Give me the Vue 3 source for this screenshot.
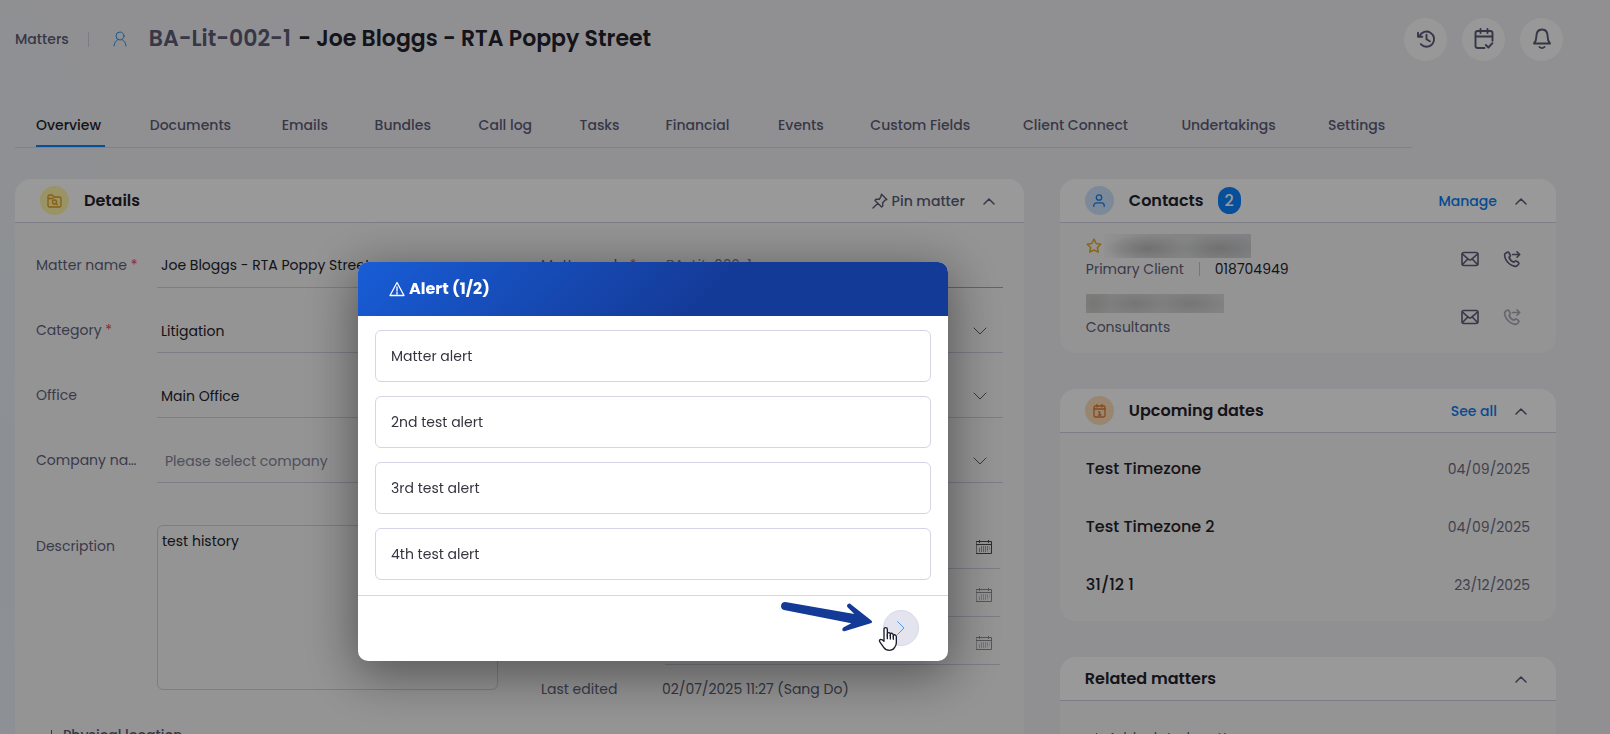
<script setup>
import { ref } from 'vue';

const tabs = [
  'Overview', 'Documents', 'Emails', 'Bundles', 'Call log', 'Tasks',
  'Financial', 'Events', 'Custom Fields', 'Client Connect', 'Undertakings', 'Settings',
];
const activeTab = ref('Overview');

const matterName = ref('Joe Bloggs - RTA Poppy Street');
const matterCode = ref('BA-Lit-002-1');
const description = ref('test history');

// Left column drop-downs
const selects = [
  { id: 'category', label: 'Category', required: true, value: 'Litigation' },
  { id: 'office', label: 'Office', required: false, value: 'Main Office' },
  { id: 'company', label: 'Company name', required: false, value: '', placeholder: 'Please select company' },
];
const sideSelects = ['Sub category', 'Status', 'Department'];

const dates = [
  { name: 'Date opened', muted: false },
  { name: 'Date closed', muted: true },
  { name: 'Date archived', muted: true },
];

const contacts = [
  { role: 'Primary Client', phone: '018704949', starred: true, canCall: true },
  { role: 'Consultants', phone: '', starred: false, canCall: false },
];

const upcoming = [
  { title: 'Test Timezone', date: '04/09/2025' },
  { title: 'Test Timezone 2', date: '04/09/2025' },
  { title: '31/12 1', date: '23/12/2025' },
];

const alerts = ['Matter alert', '2nd test alert', '3rd test alert', '4th test alert'];
</script>

<template>
  <div class="page">
    <header class="topbar">
      <a href="#" class="crumb">Matters</a>
      <span class="crumb-divider"></span>
      <svg class="crumb-icon" width="14" height="16" viewBox="0 0 14 16">
        <circle cx="7" cy="5" r="4" />
        <path d="M1 15c.3-3.400 2-5.500 4-6.500M13 15c-.3-3.400-2-5.500-4-6.500" />
      </svg>
      <h1 class="title"><span class="title-code">BA-Lit-002-1</span> - Joe Bloggs - RTA Poppy Street</h1>
      <div class="top-actions">
        <button type="button" class="round-btn" aria-label="History">
          <svg width="20" height="20" viewBox="0 0 20 20">
            <path d="M3.500 7.200A7.600 7.600 0 1 1 4.800 15.200M2 3.800v4h4.300M10.500 5.800v4.400l3.300 2" />
          </svg>
        </button>
        <button type="button" class="round-btn" aria-label="Calendar">
          <svg width="20" height="22" viewBox="0 0 20 22">
            <path d="M10.500 20H3.800A2.300 2.300 0 0 1 1.500 17.700V5.300A2.300 2.300 0 0 1 3.800 3h12.400a2.300 2.300 0 0 1 2.300 2.300v7.400M1.500 8.500h17M6.500 1v4M13.500 1v4M11.800 17l2.600 2.500 4-4.300" />
          </svg>
        </button>
        <button type="button" class="round-btn" aria-label="Notifications">
          <svg width="20" height="22" viewBox="0 0 20 22">
            <path d="M2 15.500c1.500-1.500 2.300-3.500 2.300-6.500C4.300 4 6.700 1.500 10 1.500S15.700 4 15.700 9c0 3 .8 5 2.300 6.500zM7.500 19c1.300 1.500 3.700 1.500 5 0" />
          </svg>
        </button>
      </div>
    </header>

    <nav class="tabs">
      <a
        v-for="tab in tabs"
        :key="tab"
        href="#"
        :class="['tab', { active: tab === activeTab }]"
        @click.prevent="activeTab = tab"
      ><span class="tab-text">{{ tab }}</span></a>
    </nav>

    <main class="layout">
      <section class="card">
        <div class="card-header">
          <span class="badge-icon yellow">
            <svg width="15" height="14" viewBox="0 0 15 14">
              <path d="M1 11.500v-9A1.500 1.500 0 0 1 2.500 1h2.700L7 3h5.500A1.500 1.500 0 0 1 14 4.500v7a1.500 1.500 0 0 1-1.500 1.500h-10A1.500 1.500 0 0 1 1 11.500zM1 4.500h5M9 9.500l1.300 1.200" />
              <circle cx="7.500" cy="8" r="2" />
            </svg>
          </span>
          <h2>Details</h2>
          <button type="button" class="pin-btn">
            <svg width="16" height="16" viewBox="0 0 16 16">
              <path d="M9.500 1.200l5.300 5.300-1.600.6-2.500 2.600.1 3.300-1.200 1L3 7.400l1-1.200 3.300.1L9 3.300zM5.800 10.200L1 15" />
            </svg>
            Pin matter
          </button>
          <button type="button" class="toggle" aria-label="Collapse details">
            <svg width="12" height="8" viewBox="0 0 12 8"><path d="M1 7l5-5 5 5" /></svg>
          </button>
        </div>

        <div class="details">
          <div class="column">
            <div class="row">
              <label for="matter-name" class="label">Matter name <span class="required">*</span></label>
              <div class="field"><input id="matter-name" v-model="matterName" type="text" /></div>
            </div>
            <div v-for="item in selects" :key="item.id" class="row">
              <label :for="item.id" class="label">{{ item.label }} <span v-if="item.required" class="required">*</span></label>
              <div class="field">
                <select :id="item.id" :class="{ placeholder: !item.value }">
                  <option>{{ item.value || item.placeholder }}</option>
                </select>
              </div>
            </div>
            <div class="row description">
              <label for="description" class="label">Description</label>
              <textarea id="description" v-model="description"></textarea>
            </div>
            <button type="button" class="add-btn location">
              <svg width="11" height="11" viewBox="0 0 11 11"><path d="M5.500 0v11M0 5.500h11" /></svg>
              Physical location
            </button>
          </div>

          <div class="column">
            <div class="row">
              <label for="matter-code" class="label">Matter code <span class="required">*</span></label>
              <div class="field dark"><input id="matter-code" v-model="matterCode" type="text" class="muted-value" /></div>
            </div>
            <div v-for="name in sideSelects" :key="name" class="row">
              <span class="label"></span>
              <div class="field">
                <select :aria-label="name"><option></option></select>
                <svg class="chevron" width="14" height="8" viewBox="0 0 14 8"><path d="M1 1l6 6 6-6" /></svg>
              </div>
            </div>
            <div class="dates">
              <div v-for="date in dates" :key="date.name" class="row">
                <span class="label"></span>
                <div class="field date">
                  <input type="text" :aria-label="date.name" />
                  <svg :class="['calendar', { muted: date.muted }]" width="16" height="14" viewBox="0 0 16 14">
                    <path d="M.5 1.500h15v12H.5zM.5 4.500h15M3.500 0v2.500M12.500 0v2.500" />
                    <path class="dots" d="M5 7h8.500M3 9h10.500M3 11h8.500" />
                  </svg>
                </div>
              </div>
            </div>
            <div class="row edited">
              <span class="label">Last edited</span>
              <span class="edited-value">02/07/2025 11:27 (Sang Do)</span>
            </div>
          </div>
        </div>
      </section>

      <aside class="sidebar">
        <section class="card">
          <div class="card-header">
            <span class="badge-icon blue">
              <svg width="12" height="13" viewBox="0 0 12 13">
                <circle cx="6" cy="3.500" r="2.700" />
                <path d="M.8 12.500v-1A2.700 2.700 0 0 1 3.500 8.800h5a2.700 2.700 0 0 1 2.700 2.700v1" />
              </svg>
            </span>
            <h2>Contacts</h2>
            <span class="count">2</span>
            <a href="#" class="header-link">Manage</a>
            <button type="button" class="toggle" aria-label="Collapse contacts">
              <svg width="12" height="8" viewBox="0 0 12 8"><path d="M1 7l5-5 5 5" /></svg>
            </button>
          </div>
          <ul class="list">
            <li v-for="contact in contacts" :key="contact.role" class="list-item">
              <div class="contact-text">
                <div class="contact-line">
                  <svg v-if="contact.starred" class="star" width="16" height="16" viewBox="0 0 16 16">
                    <path d="M8 1.200l2.100 4.300 4.700.7-3.400 3.300.8 4.700L8 12l-4.200 2.200.8-4.700L1.200 6.200l4.700-.7z" />
                  </svg>
                  <span :class="['redacted', { wide: contact.starred }]"></span>
                </div>
                <div class="contact-line">
                  <span class="role">{{ contact.role }}</span>
                  <span v-if="contact.phone" class="phone">{{ contact.phone }}</span>
                </div>
              </div>
              <div class="contact-actions">
                <button type="button" class="icon-btn" aria-label="Send email">
                  <svg width="18" height="16" viewBox="0 0 18 16">
                    <rect x="1" y="1.500" width="16" height="13" rx="2" />
                    <path d="M1.500 3l5.700 5.200a2.700 2.700 0 0 0 3.600 0L16.500 3M1.500 13.500l4.800-5M16.500 13.500l-4.800-5" />
                  </svg>
                </button>
                <button type="button" class="icon-btn" :disabled="!contact.canCall" aria-label="Call">
                  <svg width="18" height="18" viewBox="0 0 18 18">
                    <path d="M4.300 2.200L2.400 3.400C.5 5 2.500 10 5.200 12.700s7 4.700 9 3l1.500-1.700c.4-.5.3-1.100-.2-1.500l-2-1.400c-.5-.4-1.100-.3-1.500.1l-1 1C9 11.500 6.700 9.300 6 7.400l1-1c.4-.4.500-1 .1-1.500L5.800 2.500c-.4-.5-1-.6-1.500-.3zM9.500 4.500h7M14 1.800l2.700 2.700L14 7.200" />
                  </svg>
                </button>
              </div>
            </li>
          </ul>
        </section>

        <section class="card">
          <div class="card-header">
            <span class="badge-icon orange">
              <svg width="13" height="14" viewBox="0 0 13 14">
                <rect x="1" y="2" width="11" height="11" rx="1.500" />
                <path d="M1 5h11M4 .5V3M9 .5V3M5.500 8h1.200v3M5.300 11h2.600" />
              </svg>
            </span>
            <h2>Upcoming dates</h2>
            <a href="#" class="header-link">See all</a>
            <button type="button" class="toggle" aria-label="Collapse upcoming dates">
              <svg width="12" height="8" viewBox="0 0 12 8"><path d="M1 7l5-5 5 5" /></svg>
            </button>
          </div>
          <ul class="list">
            <li v-for="item in upcoming" :key="item.title" class="list-item">
              <span class="event">{{ item.title }}</span>
              <span class="event-date">{{ item.date }}</span>
            </li>
          </ul>
        </section>

        <section class="card">
          <div class="card-header">
            <h2>Related matters</h2>
            <button type="button" class="toggle" aria-label="Collapse related matters">
              <svg width="12" height="8" viewBox="0 0 12 8"><path d="M1 7l5-5 5 5" /></svg>
            </button>
          </div>
          <button type="button" class="add-btn related">
            <svg width="11" height="11" viewBox="0 0 11 11"><path d="M5.500 0v11M0 5.500h11" /></svg>
            Add related matter
          </button>
        </section>
      </aside>
    </main>

    <!-- Alert dialog -->
    <div class="overlay">
      <div class="modal" role="dialog" aria-labelledby="alert-title">
        <div class="modal-header">
          <svg width="16" height="16" viewBox="0 0 16 16">
            <path d="M8 1.500L15 14.500H1zM8 6v4M8 11.500v1.500" />
          </svg>
          <h2 id="alert-title">Alert (1/2)</h2>
        </div>
        <ul class="modal-body">
          <li v-for="alert in alerts" :key="alert" class="alert">{{ alert }}</li>
        </ul>
        <div class="modal-footer">
          <button type="button" class="next-btn" aria-label="Next alert">
            <svg width="10" height="16" viewBox="0 0 10 16"><path d="M1.500 1.500L8 8l-6.500 6.500" /></svg>
          </button>
          <svg class="arrow" width="94" height="34" viewBox="30 30 282 102">
            <path d="M46 36L253 72 232 51Q229 43 236 41 240 40 244 44L303 91Q310 97 302 100L226 123Q219 125 217 120 216 115 221 112L244 100 42 60Q33 57 33 48 34 36 46 36z" />
          </svg>
          <svg class="hand" width="20" height="26" viewBox="324 108 60 78">
            <path d="M342 154V118Q342 113 347 113T352 118V137V131Q353 127 357 128T361 133V138V133Q363 129 366 130T370 135V141V137Q373 133 376 135T379 140V158Q379 166 374 172 371 180 359 181 347 181 341 172L329 155Q327 149 332 148 337 148 342 154z" />
            <path d="M352 134v12M361 136v11M370 139v9" />
          </svg>
        </div>
      </div>
    </div>
  </div>
</template>

<style>
html,
body {
  margin: 0;
}
</style>

<style scoped>
* {
  box-sizing: border-box;
}

.page {
  height: 100vh;
  overflow: hidden;
  padding: 0 54px 0 15px;
  background: radial-gradient(ellipse 160px 600px at 0 70%, #e9f1f9, #f1f1f4);
  color: #22222c;
  font-family: Poppins, Inter, sans-serif;
  font-size: 14px;
  line-height: 22px;
}

h1,
h2,
ul {
  margin: 0;
  padding: 0;
}

ul {
  list-style: none;
}

a {
  text-decoration: none;
}

button,
input,
select,
textarea {
  border: 0;
  padding: 0;
  background: none;
  color: inherit;
  font: inherit;
}

button {
  cursor: pointer;
}

svg {
  flex: none;
  fill: none;
  stroke: currentColor;
  stroke-linecap: round;
  stroke-linejoin: round;
}

.topbar {
  display: flex;
  align-items: center;
  height: 78px;
}

.crumb {
  color: #5c5c78;
  font-weight: 500;
}

.crumb-divider {
  width: 1px;
  height: 15px;
  margin: 0 24px 0 19px;
  background: #cfcfd8;
}

.crumb-icon {
  color: #2e93e6;
}

.title {
  margin-left: 22px;
  font-size: 22px;
  line-height: 32px;
  font-weight: 600;
}

.title-code {
  margin-right: 2px;
  color: #5c5c78;
}

.top-actions {
  display: flex;
  gap: 15px;
  margin: 0 -7px 0 auto;
}

.round-btn {
  display: flex;
  align-items: center;
  justify-content: center;
  width: 43px;
  height: 43px;
  border-radius: 50%;
  background: #fdfdfd;
  color: #5a5a78;
}

.round-btn svg {
  stroke-width: 1.9;
}

/* Spare width is shared in proportion to each tab's text */
.tabs {
  display: table;
  width: calc(100% - 144px);
  margin-top: 24px;
  padding-left: 21px;
  border-bottom: 1px solid #d6d6de;
}

.tab {
  display: table-cell;
  padding-right: 37px;
  color: #5c5c78;
  font-weight: 500;
  white-space: nowrap;
}

.tab:last-child {
  padding-right: 18px;
}

.tab-text {
  display: inline-block;
  height: 45px;
  padding-top: 12px;
  border-bottom: 2px solid transparent;
  vertical-align: top;
}

.tab.active {
  padding-right: 33px;
  color: #22222c;
}

.tab.active .tab-text {
  padding-right: 4px;
  border-color: #0d84ff;
}

.layout {
  display: grid;
  grid-template-columns: 61fr 30fr;
  align-items: start;
  gap: 36px;
  margin-top: 31px;
}

.sidebar {
  display: flex;
  flex-direction: column;
  gap: 36px;
}

.card {
  border-radius: 16px;
  background: #f7f7f7;
}

.card-header {
  display: flex;
  align-items: center;
  height: 44px;
  padding: 0 29px 0 25px;
  border-bottom: 1px solid #d0d0e2;
  border-radius: 16px 16px 0 0;
  background: #fff;
}

.card-header h2 {
  font-size: 16px;
  font-weight: 600;
}

.badge-icon {
  display: flex;
  align-items: center;
  justify-content: center;
  width: 29px;
  height: 29px;
  margin-right: 15px;
  border-radius: 50%;
}

.badge-icon svg {
  stroke-width: 1.3;
}

.badge-icon.yellow {
  background: #fff5ab;
  color: #dfa020;
}

.badge-icon.blue {
  background: #cfe5ff;
  color: #1b7fe8;
}

.badge-icon.orange {
  background: #ffe0bd;
  color: #e07a30;
}

.count {
  width: 23px;
  height: 27px;
  margin-left: 14px;
  border-radius: 12px;
  background: #0d84ff;
  color: #fff;
  font-size: 16px;
  line-height: 27px;
  font-weight: 500;
  text-align: center;
}

.pin-btn {
  display: flex;
  align-items: center;
  gap: 4px;
  margin-left: auto;
  color: #5c5c78;
  font-weight: 500;
}

.pin-btn svg {
  stroke-width: 1.4;
}

.header-link {
  margin-left: auto;
  color: #0d7df2;
  font-weight: 500;
}

.toggle {
  display: flex;
  margin-left: auto;
  color: #5c5c78;
}

.toggle svg {
  stroke-width: 1.5;
}

.pin-btn + .toggle,
.header-link + .toggle {
  margin-left: 18px;
}

.details {
  display: grid;
  grid-template-columns: 1fr 1fr;
  gap: 43px;
  padding: 21px 21px 0;
}

.column {
  display: flex;
  flex-direction: column;
  gap: 21px;
}

.row {
  display: flex;
  height: 44px;
}

.label {
  flex: none;
  width: 121px;
  padding-right: 16px;
  overflow: hidden;
  color: #62627c;
  line-height: 43px;
  text-overflow: ellipsis;
  white-space: nowrap;
}

.required {
  color: #e8504a;
}

.field {
  display: flex;
  flex: 1;
  align-items: center;
  min-width: 0;
  padding-left: 4px;
  border-bottom: 1px solid #d0d0e2;
}

.field.dark {
  border-color: #a5a5b2;
}

.field input,
.field select {
  flex: 1;
  min-width: 0;
  height: 42px;
  appearance: none;
  outline: none;
}

.field .placeholder {
  padding-left: 4px;
  color: #84849a;
}

.field .muted-value {
  color: #84849a;
}

.chevron {
  margin-right: 16px;
  color: #5c5c68;
}

.description {
  height: 165px;
  margin-top: 21px;
}

textarea {
  flex: 1;
  min-width: 0;
  padding: 4px;
  border: 1px solid #d0d0d9;
  border-radius: 6px;
  outline: none;
  resize: none;
}

.add-btn {
  display: flex;
  align-items: center;
  gap: 6px;
  color: #5c5c78;
}

.location {
  margin: 13px 0 0 10px;
  font-weight: 500;
}

.dates {
  margin-top: 17px;
}

.dates .row {
  height: 48px;
}

.field.date {
  margin: 0 3px;
  padding-top: 4px;
}

.calendar {
  margin-right: 8px;
  color: #4a4a50;
}

.calendar.muted {
  color: #8e8e96;
}

.calendar .dots {
  stroke-dasharray: 1 1;
  stroke-linecap: butt;
}

.edited {
  margin-top: -18px;
}

.edited-value {
  color: #5c5c70;
  line-height: 43px;
}

.list {
  padding: 7px 26px;
}

.list-item {
  display: flex;
  align-items: center;
  justify-content: space-between;
  height: 58px;
}

.contact-text {
  padding-bottom: 4px;
}

.contact-line {
  display: flex;
  align-items: center;
  height: 23px;
}

.star {
  margin-right: 2px;
  color: #e5ab28;
  stroke-width: 1.5;
}

/* Hidden client names, shown as soft smudges */
.redacted {
  width: 138px;
  height: 19px;
  background:
    radial-gradient(ellipse 30px 12px at 50px 50%, #c4c4c4, transparent),
    radial-gradient(ellipse 36px 12px at 104px 50%, #c4c4c4, transparent),
    radial-gradient(ellipse 20px 16px at 8px 50%, #c8c6c4, transparent),
    linear-gradient(90deg, #d6d6d6, #d9dadc);
}

.redacted.wide {
  width: 147px;
  height: 24px;
  background:
    radial-gradient(ellipse 44px 14px at 44px 60%, #bcbcbc, transparent),
    radial-gradient(ellipse 40px 14px at 116px 60%, #bcbcbc, transparent),
    linear-gradient(90deg, #f3f3f3, #e0e0e0 30%, #d4d6da);
}

.role {
  color: #62627c;
}

.phone {
  margin-left: 15px;
  padding-left: 15px;
  border-left: 1px solid #c5c5d2;
  line-height: 14px;
}

.contact-actions {
  display: flex;
  gap: 24px;
  padding-right: 9px;
}

.icon-btn {
  display: flex;
  align-items: center;
  color: #5c5c78;
}

.icon-btn svg {
  stroke-width: 1.6;
}

.icon-btn:disabled {
  opacity: 0.5;
}

.event {
  font-size: 16px;
  font-weight: 500;
}

.event-date {
  color: #6c6c84;
}

.related {
  margin: 26px 0 20px 31px;
}

.overlay {
  position: fixed;
  inset: 0;
  display: flex;
  align-items: flex-start;
  justify-content: center;
  padding: 262px 304px 0 0;
  background: rgba(0, 0, 0, 0.4);
}

.modal {
  width: 590px;
  max-width: 100%;
  border-radius: 10px;
  background: #fff;
  box-shadow: 0 11px 50px 4px rgba(0, 0, 0, 0.42);
}

.modal-header {
  display: flex;
  align-items: center;
  gap: 4px;
  height: 54px;
  padding: 0 31px;
  border-radius: 10px 10px 0 0;
  background: linear-gradient(135deg, #185dd6, #143a97 60%);
  color: #fff;
}

.modal-header svg {
  stroke-width: 1.3;
}

.modal-header h2 {
  font-size: 16px;
  font-weight: 700;
}

.modal-body {
  display: flex;
  flex-direction: column;
  gap: 14px;
  padding: 14px 17px 15px;
}

.alert {
  padding: 14px 15px;
  border: 1px solid #d6d5e6;
  border-radius: 6px;
  color: #35353f;
}

.modal-footer {
  position: relative;
  display: flex;
  justify-content: flex-end;
  padding: 14px 29px 15px;
  border-top: 1px solid #d6d5e6;
}

.next-btn {
  display: flex;
  align-items: center;
  justify-content: center;
  width: 36px;
  height: 36px;
  border: 1px solid #d9d9e6;
  border-radius: 50%;
  background: #e4e4ee;
  color: #4a9cf5;
}

.arrow {
  position: absolute;
  top: 4px;
  right: 74px;
  fill: #143a97;
  stroke: none;
}

.hand {
  position: absolute;
  top: 30px;
  right: 50px;
  fill: #fff;
  stroke: #1c1c2c;
  stroke-width: 4;
}
</style>
